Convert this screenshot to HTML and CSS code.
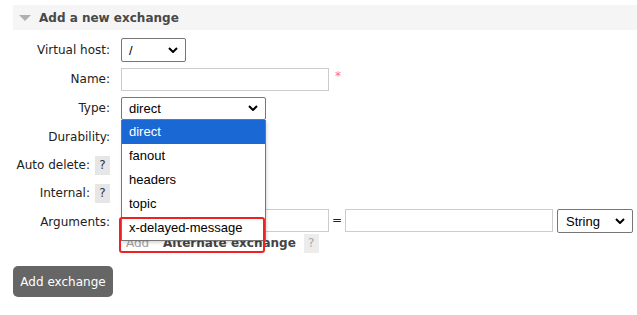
FILE: index.html
```html
<!DOCTYPE html>
<html lang="en">
<head>
    <meta charset="UTF-8">
    <title>Add a new exchange</title>
    <link rel="stylesheet" href="styles.css">
</head>
<body>

<div class="section">
    <!-- Collapsible header -->
    <h2 class="section-title"><span class="arrow"></span>Add a new exchange</h2>

    <div class="form">
        <div class="row row-wide">
            <div class="lbl">Virtual host:</div>
            <div class="select select-vhost"><span>/</span><svg class="chev" viewBox="0 0 10 6"><path d="M1 1 L5 5 L9 1"/></svg></div>
        </div>
        <div class="row row-wide">
            <div class="lbl">Name:</div>
            <input class="text text-name" type="text">
            <span class="req">*</span>
        </div>
        <div class="row row-wide">
            <div class="lbl">Type:</div>
            <div class="type-cell">
                <div class="select select-type"><span>direct</span><svg class="chev" viewBox="0 0 10 6"><path d="M1 1 L5 5 L9 1"/></svg></div>
                <!-- open option list -->
                <ul class="dropdown">
                    <li class="active">direct</li>
                    <li>fanout</li>
                    <li>headers</li>
                    <li>topic</li>
                    <li class="marked">x-delayed-message<span class="mark"></span></li>
                </ul>
            </div>
        </div>
        <!-- these selects sit under the open list -->
        <div class="row">
            <div class="lbl">Durability:</div>
            <div class="select select-small"></div>
        </div>
        <div class="row">
            <div class="lbl">Auto delete: <span class="help">?</span></div>
            <div class="select select-small"></div>
        </div>
        <div class="row">
            <div class="lbl">Internal: <span class="help">?</span></div>
            <div class="select select-small"></div>
        </div>
        <div class="row row-args">
            <div class="lbl">Arguments:</div>
            <input class="text text-key" type="text">
            <span class="eq">=</span>
            <input class="text text-val" type="text">
            <div class="select select-string"><span>String</span><svg class="chev" viewBox="0 0 10 6"><path d="M1 1 L5 5 L9 1"/></svg></div>
        </div>
        <div class="row row-alt">
            <div class="lbl"></div>
            <span class="add-link">Add</span>
            <span class="alt-name">Alternate exchange</span>
            <span class="help help-light">?</span>
        </div>
    </div>

    <button class="btn">Add exchange</button>
</div>

</body>
</html>
```

FILE: styles.css
```css
/* Page base */
body {
    margin: 0;
    background: #ffffff;
    font-family: "DejaVu Sans", Verdana, sans-serif;
    font-size: 12px;
    color: #222;
}
.section {
    padding: 5px 0 0 13px;
}
/* Header bar */
.section-title {
    margin: 0;
    height: 25px;
    background: #f5f5f5;
    display: flex;
    align-items: center;
    font-size: 12px;
    font-weight: bold;
    color: #484848;
}
.section-title .arrow {
    width: 0;
    height: 0;
    margin: 0 8px 0 6px;
    border-left: 6px solid transparent;
    border-right: 6px solid transparent;
    border-top: 6px solid #b0b0b0;
}
/* Form rows */
.form {
    margin-top: 8px;
}
.row {
    display: flex;
    align-items: center;
    height: 24px;
    margin-bottom: 4px;
}
.row-wide {
    margin-bottom: 5px;
}
.lbl {
    width: 97px;
    margin-right: 11px;
    text-align: right;
    flex-shrink: 0;
    display: flex;
    justify-content: flex-end;
    align-items: center;
    gap: 5px;
    white-space: nowrap;
}
.help {
    display: inline-flex;
    align-items: center;
    justify-content: center;
    width: 15px;
    height: 19px;
    background: #e6e6e6;
    color: #333;
}
/* Fake select boxes */
.select {
    box-sizing: border-box;
    height: 24px;
    border: 1px solid #767676;
    border-radius: 2px;
    background: #fff;
    display: flex;
    align-items: center;
    justify-content: space-between;
    padding: 0 7px 0 7px;
    font-family: "Liberation Sans", Arial, sans-serif;
    font-size: 13px;
    color: #000;
}
.select .chev {
    width: 10px;
    height: 6px;
    fill: none;
    stroke: #000;
    stroke-width: 2;
}
.select-vhost {
    width: 65px;
}
.select-type {
    width: 145px;
    height: 23px;
}
.select-small {
    width: 90px;
}
.select-string {
    width: 76px;
    margin-left: 4px;
    padding-left: 8px;
}
/* Text inputs */
.text {
    box-sizing: border-box;
    height: 23px;
    border: 1px solid #cccccc;
    margin: 0;
    padding: 0 4px;
}
.text-name {
    width: 208px;
}
.req {
    margin-left: 6px;
    color: #ff7070;
    align-self: flex-start;
    margin-top: 2px;
}
.row-args {
    align-items: flex-start;
}
.row-args .lbl {
    margin-top: 6px;
}
.text-key {
    width: 208px;
}
.eq {
    width: 16px;
    text-align: center;
    margin-top: 4px;
}
.text-val {
    width: 208px;
}
/* Open dropdown list over the form */
.type-cell {
    position: relative;
}
.dropdown {
    position: absolute;
    left: 0;
    top: 23px;
    width: 145px;
    margin: 0;
    padding: 0;
    list-style: none;
    box-sizing: border-box;
    border: 1px solid #767676;
    border-top: none;
    background: #fff;
    z-index: 2;
    font-family: "Liberation Sans", Arial, sans-serif;
    font-size: 13px;
    color: #000;
    box-shadow: 1px 2px 3px rgba(0, 0, 0, 0.15);
}
.dropdown li {
    height: 24px;
    line-height: 24px;
    padding-left: 7px;
}
.dropdown li.active {
    background: #1a68d4;
    color: #fff;
}
.dropdown li.marked {
    position: relative;
}
.dropdown .mark {
    position: absolute;
    left: -3px;
    top: 1px;
    width: 142px;
    height: 32px;
    border: 2px solid #ee2222;
    border-radius: 3px;
}
/* Alternate exchange line */
.row-alt {
    height: 20px;
    margin-top: -4px;
}
.add-link {
    margin-left: 5px;
    color: #a0a0a0;
    width: 37px;
}
.alt-name {
    font-weight: bold;
    color: #444;
    margin-right: 8px;
}
.help-light {
    background: #ececec;
    color: #aaa;
}
/* Submit button */
.btn {
    margin-top: 9px;
    width: 100px;
    height: 31px;
    border: none;
    border-radius: 5px;
    background: #666666;
    color: #ffffff;
    font-family: "DejaVu Sans", Verdana, sans-serif;
    font-size: 12px;
    padding: 0;
}
```
